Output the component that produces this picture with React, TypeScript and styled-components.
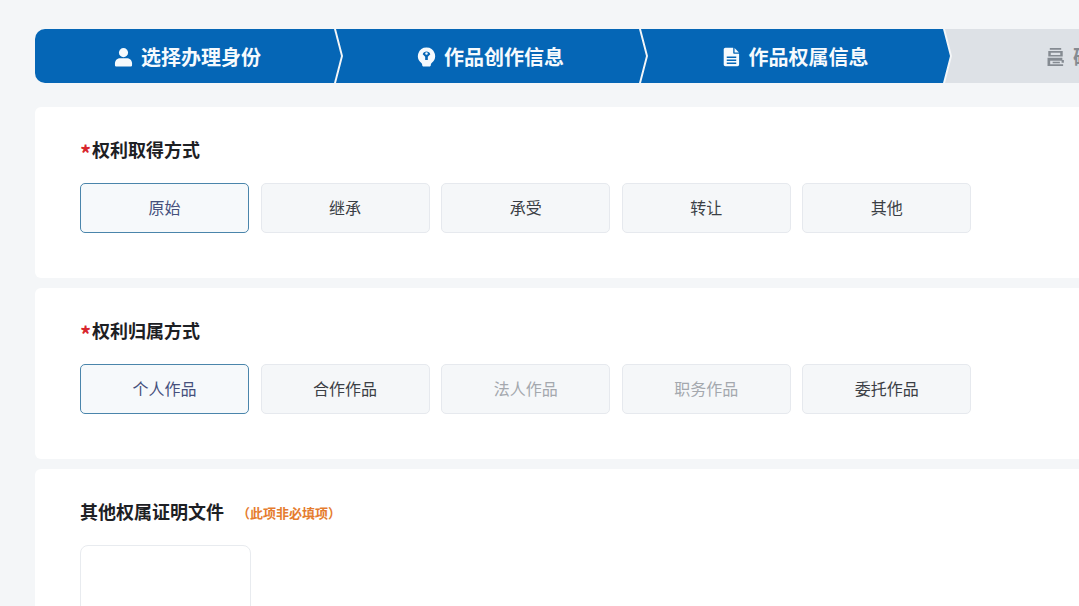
import { ReactNode } from "react";
import styled, { createGlobalStyle } from "styled-components";

const GlobalStyle = createGlobalStyle`
	html, body {
		margin: 0;
		padding: 0;
		height: 100%;
		overflow: hidden;
		background: #f4f6f8;
		font-family: "Noto Sans CJK SC", "Noto Sans", sans-serif;
	}
`;

const Page = styled.div`
	width: 1079px;
	height: 606px;
	overflow: hidden;
	padding: 29px 0 0 35px;
	box-sizing: border-box;
`;

const Steps = styled.div`
	display: flex;
	width: 1300px;
	height: 54px;
	margin-bottom: 24px;
`;

const Step = styled.div<{ $width: number; $active: boolean; $first?: boolean }>`
	flex: none;
	width: ${(props) => props.$width}px;
	height: 54px;
	margin-left: ${(props) => (props.$first ? 0 : -5)}px;
	padding: 1px 1px 0 0;
	display: flex;
	align-items: center;
	justify-content: center;
	gap: 8px;
	box-sizing: border-box;
	background: ${(props) => (props.$active ? "#0566b6" : "#dde1e6")};
	color: ${(props) => (props.$active ? "#f6fafd" : "#858b92")};
	font-size: 20px;
	font-weight: 700;
	line-height: 1;
	border-radius: ${(props) => (props.$first ? "10px 0 0 10px" : "0")};
	clip-path: ${(props) => (props.$first
		? "polygon(0 0, calc(100% - 7px) 0, 100% 50%, calc(100% - 7px) 100%, 0 100%)"
		: "polygon(0 0, calc(100% - 7px) 0, 100% 50%, calc(100% - 7px) 100%, 0 100%, 7px 50%)")};
`;

const StepIcon = styled.svg`
	flex: none;
	width: 19px;
	height: 20px;
	fill: currentColor;
`;

const Card = styled.section<{ $height: number }>`
	height: ${(props) => props.$height}px;
	margin-bottom: 10px;
	padding: 30px 0 0 45px;
	box-sizing: border-box;
	background: #ffffff;
	border-radius: 6px 0 0 6px;
`;

const TitleRow = styled.div`
	display: flex;
	align-items: center;
	height: 24px;
	margin-bottom: 22px;
`;

const Star = styled.span`
	width: 12px;
	height: 24px;
	color: #d8252c;
	font-size: 22px;
	font-weight: 700;
	line-height: 30px;
`;

const Title = styled.h2`
	margin: 0;
	color: #1d2024;
	font-size: 18px;
	font-weight: 700;
`;

const Hint = styled.span`
	margin-left: 13px;
	color: #e57c2e;
	font-size: 13px;
	font-weight: 700;
	padding-top: 2px;
`;

const Options = styled.div`
	display: grid;
	grid-template-columns: repeat(5, 169px);
	column-gap: 11.6px;
`;

const Option = styled.button<{ $selected?: boolean; $disabled?: boolean }>`
	height: 50px;
	padding: 0 0 2px;
	border-radius: 5px;
	border: ${(props) => (props.$selected ? "1.5px solid #4a85ab" : "1px solid #e6e9ee")};
	background: ${(props) => (props.$selected ? "#f6f9fb" : "#f5f7f9")};
	color: ${(props) => (props.$selected ? "#45507c" : props.$disabled ? "#a4a8ae" : "#3b3f45")};
	font-family: inherit;
	font-size: 16px;
`;

const UploadBox = styled.div`
	width: 171px;
	height: 80px;
	box-sizing: border-box;
	border: 1px solid #e8ebef;
	border-radius: 8px;
	background: #ffffff;
`;

function UserIcon(): JSX.Element {
	return (
		<StepIcon viewBox="0 0 20 20">
			<circle cx="10" cy="5.4" r="4.8" />
			<path d="M1 19v-2.4c0-3.4 2.8-5.4 5.6-5.4h6.8c2.8 0 5.6 2 5.6 5.4V19c0 .5-.4.9-.9.9H1.9c-.5 0-.9-.4-.9-.9z" />
		</StepIcon>
	);
}

function BulbIcon(): JSX.Element {
	return (
		<StepIcon viewBox="0 0 20 20">
			<path d="M10 0a9 9 0 0 0-5.4 16.2c.5.4.8.9.8 1.4v.8c0 .9.7 1.6 1.6 1.6h6c.9 0 1.6-.7 1.6-1.6v-.8c0-.5.3-1 .8-1.4A9 9 0 0 0 10 0z" />
			<path d="M6 7.2a4.2 4.2 0 0 1 8 0l-2.6 2.6v3.4H8.6V9.800z" fill="#0566b6" />
			<circle cx="10" cy="6.400" r="1.300" />
		</StepIcon>
	);
}

function FileIcon(): JSX.Element {
	return (
		<StepIcon viewBox="0 0 20 20">
			<path fillRule="evenodd" d="M3.6.2h8.2v5.2c0 .7.5 1.2 1.2 1.2h5v11.4c0 1-.8 1.8-1.8 1.8H3.6c-1 0-1.8-.8-1.8-1.8V2c0-1 .8-1.8 1.8-1.8zM5 9.4V11h10V9.4zm0 3.2v1.6h10v-1.6zm0 3.2v1.6h10v-1.6z" />
			<path d="M13.2.5l4.6 4.7h-4.6z" />
		</StepIcon>
	);
}

function StampIcon(): JSX.Element {
	return (
		<StepIcon viewBox="0 0 20 20">
			<path fillRule="evenodd" d="M4 .4h12v2H4zM2.4 3.6h15.2v6H2.4zM5 5.4v2.4h10V5.4zM1.600 10.800h15.600v2.400h1.600V16h-2.400v-2H4.400v3.600H18v2H1.600zM7 15h7.600v1.600H7z" />
		</StepIcon>
	);
}

interface StepItem {
	label: string;
	icon: ReactNode;
	width: number;
	active: boolean;
}

const stepItems: StepItem[] = [
	{ label: "选择办理身份", icon: <UserIcon />, width: 306, active: true },
	{ label: "作品创作信息", icon: <BulbIcon />, width: 310, active: true },
	{ label: "作品权属信息", icon: <FileIcon />, width: 309, active: true },
	{ label: "确认提交信息", icon: <StampIcon />, width: 350, active: false }
];

interface OptionItem {
	label: string;
	selected?: boolean;
	disabled?: boolean;
}

const acquireOptions: OptionItem[] = [
	{ label: "原始", selected: true },
	{ label: "继承" },
	{ label: "承受" },
	{ label: "转让" },
	{ label: "其他" }
];

const ownerOptions: OptionItem[] = [
	{ label: "个人作品", selected: true },
	{ label: "合作作品" },
	{ label: "法人作品", disabled: true },
	{ label: "职务作品", disabled: true },
	{ label: "委托作品" }
];

function OptionSection({ title, options }: { title: string; options: OptionItem[] }): JSX.Element {
	return (
		<Card $height={171}>
			<TitleRow>
				<Star>*</Star>
				<Title>{title}</Title>
			</TitleRow>
			<Options>
				{options.map((option) => (
					<Option key={option.label} $selected={option.selected} $disabled={option.disabled}>
						{option.label}
					</Option>
				))}
			</Options>
		</Card>
	);
}

export default function App(): JSX.Element {
	return (
		<Page>
			<GlobalStyle />
			<Steps>
				{stepItems.map((step, index) => (
					<Step key={step.label} $width={step.width} $active={step.active} $first={index === 0}>
						{step.icon}
						<span>{step.label}</span>
					</Step>
				))}
			</Steps>
			<OptionSection title="权利取得方式" options={acquireOptions} />
			<OptionSection title="权利归属方式" options={ownerOptions} />
			<Card $height={200}>
				<TitleRow>
					<Title>其他权属证明文件</Title>
					<Hint>（此项非必填项）</Hint>
				</TitleRow>
				<UploadBox />
			</Card>
		</Page>
	);
}
